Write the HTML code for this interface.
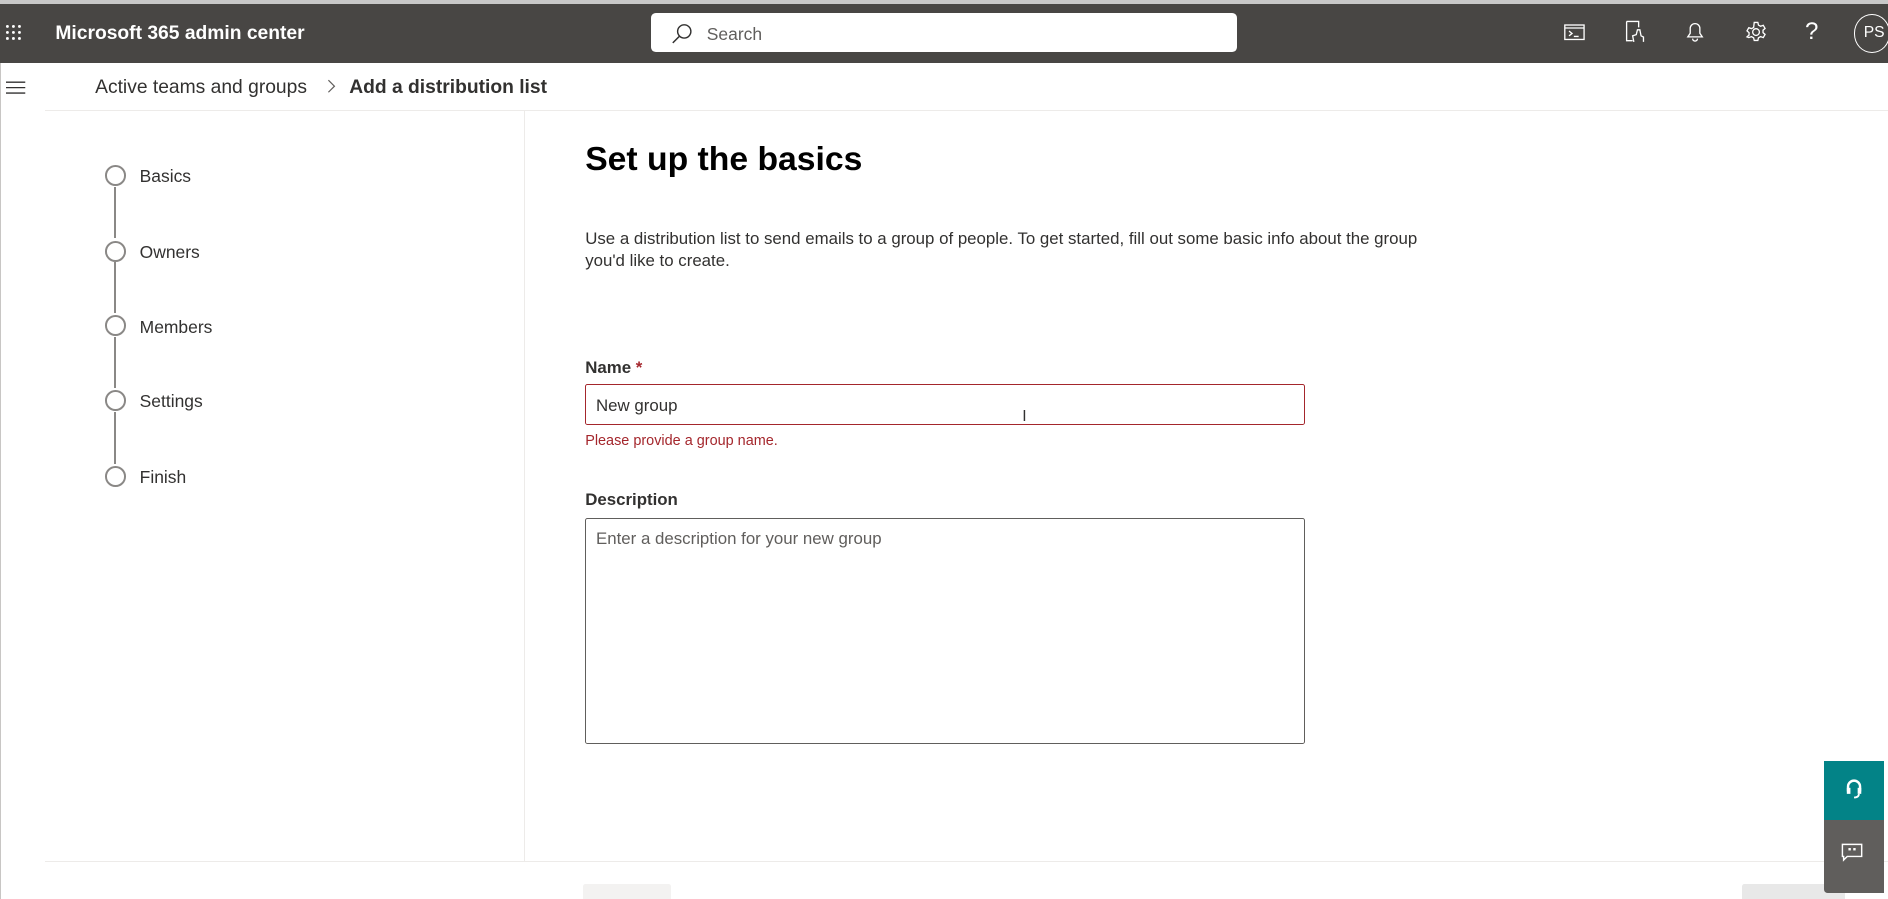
<!DOCTYPE html>
<html><head><meta charset="utf-8"><style>
html,body{margin:0;padding:0;width:1888px;height:899px;overflow:hidden;background:#fff;font-family:"Liberation Sans",sans-serif;}
#w{zoom:1.2041;position:relative;width:1568px;height:747px;overflow:hidden;}
.a{position:absolute;}
.hdr{left:0;top:3px;width:1568px;height:49px;background:#484644;}
.top{left:0;top:0;width:1568px;height:3px;background:#c8c8c8;}
.ic{stroke:#fff;fill:none;stroke-width:1.1;}
.step{position:absolute;left:87px;width:14px;height:14px;border:1.8px solid #8a8886;border-radius:50%;background:#fff;}
.lbl{position:absolute;left:116px;font-size:14.5px;color:#323130;}
.con{position:absolute;left:95px;width:1.5px;background:#8a8886;}
</style></head><body><div id="w">
<div class="a top"></div>
<div class="a hdr"></div>
<svg class="a" style="left:4px;top:20px" width="16" height="16"><g fill="#fff"><circle cx="2" cy="2" r="1.2"/><circle cx="7" cy="2" r="1.2"/><circle cx="12" cy="2" r="1.2"/><circle cx="2" cy="7" r="1.2"/><circle cx="7" cy="7" r="1.2"/><circle cx="12" cy="7" r="1.2"/><circle cx="2" cy="12" r="1.2"/><circle cx="7" cy="12" r="1.2"/><circle cx="12" cy="12" r="1.2"/></g></svg>
<div class="a" style="left:46px;top:19px;color:#fff;font-weight:bold;font-size:16px;">Microsoft 365 admin center</div>
<div class="a" style="left:541px;top:11px;width:486px;height:32px;background:#fff;border-radius:4px;"></div>
<svg class="a" style="left:557px;top:19px" width="18" height="18"><circle cx="11" cy="7" r="5.5" stroke="#323130" fill="none" stroke-width="1.2"/><line x1="7" y1="11" x2="1.5" y2="16.5" stroke="#323130" stroke-width="1.3"/></svg>
<div class="a" style="left:587px;top:20px;font-size:14.5px;color:#605e5c;">Search</div>
<svg class="a" style="left:1298px;top:18px" width="20" height="18"><rect x="1.5" y="2.5" width="16" height="12" class="ic"/><line x1="1.5" y1="5" x2="17.5" y2="5" class="ic"/><path d="M5 7.5l2.5 2-2.5 2M9 12h4" class="ic"/></svg>
<svg class="a" style="left:1348px;top:16px" width="20" height="22"><path d="M3 2h10v5M3 2v16h5" class="ic"/><path d="M9 19l-1-5 3-1 1-4h2l1 5 2 1v4" class="ic"/></svg>
<svg class="a" style="left:1398px;top:17px" width="20" height="20"><path d="M4 14h12l-2-3V7a4 4 0 0 0-8 0v4z M8 15.5a2 2 0 0 0 4 0" class="ic"/></svg>
<svg class="a" style="left:1448px;top:17px" width="20" height="20"><circle cx="10" cy="10" r="2.8" class="ic"/><path d="M8.5 2h3l.5 2.2 1.8 1 2.2-.8 1.5 2.6-1.7 1.5v2l1.7 1.5-1.5 2.6-2.2-.8-1.8 1-.5 2.2h-3l-.5-2.2-1.8-1-2.2.8L2.5 14l1.7-1.5v-2L2.5 9l1.5-2.6 2.2.8 1.8-1z" class="ic"/></svg>
<div class="a" style="left:1499px;top:15px;color:#fff;font-size:20px;">?</div>
<div class="a" style="left:1540px;top:12px;width:28px;height:30px;border:1px solid #fff;border-radius:50%;color:#fff;font-size:13px;line-height:30px;text-indent:7px;">PS</div>
<div class="a" style="left:0;top:52px;width:1px;height:695px;background:#c8c6c4;"></div>
<svg class="a" style="left:5px;top:67px" width="17" height="12"><path d="M0 1h16M0 5.5h16M0 10h16" stroke="#323130" stroke-width="1.1"/></svg>
<div class="a" style="left:79px;top:64px;font-size:16px;color:#323130;">Active teams and groups</div>
<svg class="a" style="left:271px;top:66px" width="10" height="12"><path d="M2 1l5 5-5 5" stroke="#605e5c" fill="none"/></svg>
<div class="a" style="left:290px;top:64px;font-size:16px;font-weight:bold;color:#323130;">Add a distribution list</div>
<div class="a" style="left:37px;top:91px;width:1531px;height:1px;background:#edebe9;"></div>
<div class="a" style="left:435px;top:92px;width:1px;height:623px;background:#edebe9;"></div>
<div class="con" style="top:155px;height:43px"></div>
<div class="con" style="top:218px;height:42px"></div>
<div class="con" style="top:280px;height:42px"></div>
<div class="con" style="top:342px;height:43px"></div>
<div class="step" style="top:137px"></div><div class="lbl" style="top:138px">Basics</div>
<div class="step" style="top:200px"></div><div class="lbl" style="top:201px">Owners</div>
<div class="step" style="top:262px"></div><div class="lbl" style="top:263px">Members</div>
<div class="step" style="top:324px"></div><div class="lbl" style="top:325px">Settings</div>
<div class="step" style="top:387px"></div><div class="lbl" style="top:388px">Finish</div>
<div class="a" style="left:486px;top:116px;font-size:28px;font-weight:bold;color:#000;">Set up the basics</div>
<div class="a" style="left:486px;top:189px;width:715px;font-size:14px;line-height:19px;color:#323130;">Use a distribution list to send emails to a group of people. To get started, fill out some basic info about the group you'd like to create.</div>
<div class="a" style="left:486px;top:297px;font-size:14px;font-weight:bold;color:#323130;">Name <span style="color:#a4262c">*</span></div>
<div class="a" style="left:486px;top:319px;width:596px;height:32px;border:1px solid #a4262c;border-radius:2px;"></div>
<div class="a" style="left:495px;top:329px;font-size:14px;color:#323130;">New group</div>
<div class="a" style="left:849px;top:339px;font-size:13px;color:#323130;">I</div>
<div class="a" style="left:486px;top:360px;font-size:12px;color:#a4262c;">Please provide a group name.</div>
<div class="a" style="left:486px;top:407px;font-size:14px;font-weight:bold;color:#323130;">Description</div>
<div class="a" style="left:486px;top:430px;width:596px;height:186px;border:1px solid #605e5c;border-radius:2px;"></div>
<div class="a" style="left:495px;top:439px;font-size:14px;color:#605e5c;">Enter a description for your new group</div>
<div class="a" style="left:37px;top:715px;width:1531px;height:1px;background:#edebe9;"></div>
<div class="a" style="left:484px;top:734px;width:73px;height:20px;background:#f3f2f1;border-radius:2px;"></div>
<div class="a" style="left:1447px;top:734px;width:85px;height:20px;background:#e8e8e8;border-radius:2px;"></div>
<div class="a" style="left:1515px;top:632px;width:50px;height:49px;background:#038387;"></div>
<svg class="a" style="left:1530px;top:645px" width="20" height="22"><path d="M5 12V8a5 5 0 0 1 10 0v4" stroke="#fff" stroke-width="2" fill="none"/><rect x="4" y="9" width="3" height="5" fill="#fff"/><rect x="13" y="9" width="3" height="5" fill="#fff"/><path d="M14 14q0 3-4 3" stroke="#fff" stroke-width="1.5" fill="none"/></svg>
<div class="a" style="left:1515px;top:681px;width:50px;height:61px;background:#605e5c;border-radius:0 0 0 3px;"></div>
<svg class="a" style="left:1528px;top:699px" width="22" height="20"><path d="M2 2h16v10H6l-3 3v-3H2z" stroke="#fff" fill="none" stroke-width="1.2"/><rect x="7" y="5" width="2" height="2" fill="#fff"/><rect x="11" y="5" width="2" height="2" fill="#fff"/></svg>
</div></body></html>
